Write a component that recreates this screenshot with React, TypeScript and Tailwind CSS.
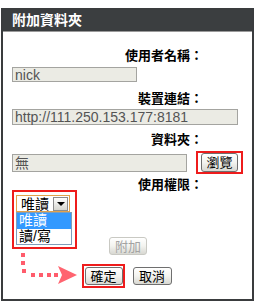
import * as React from 'react';

const CJK = { fontFamily: '"Liberation Sans", "Noto Sans CJK TC", sans-serif' };

function XpButton({ children, disabled, className }: { children: React.ReactNode; disabled?: boolean; className?: string }) {
  return (
    <button
      type="button"
      disabled={disabled}
      className={
        'flex items-center justify-center rounded-[3px] border text-[13px] leading-none bg-gradient-to-b from-white via-[#f3f3ef] to-[#d8d8d2] ' +
        (disabled ? 'border-[#c9c9c3] text-[#a3a3a3] ' : 'border-[#6f6f6f] text-black ') +
        (className ?? '')
      }
    >
      {children}
    </button>
  );
}

function Highlight({ className }: { className: string }) {
  return <span className={'pointer-events-none absolute border-2 border-[#ee1c1c] ' + className} />;
}

// drawn in page coordinates, shifted by the box's top-left padding edge (3, 10)
function PinkArrow() {
  const dots = [
    [21, 253],
    [21, 261],
    [22, 269],
    [31, 273],
    [39, 273],
    [47, 273],
    [54, 273],
  ];
  return (
    <svg className="pointer-events-none absolute left-0 top-0" width="250" height="291" viewBox="3 10 250 291">
      {dots.map(([x, y]) => (
        <rect key={`${x}-${y}`} x={x} y={y} width="4" height="4" fill="#ff5c6c" />
      ))}
      <polygon points="58,266 77,275 58,284 62,275" fill="#ff6470" />
    </svg>
  );
}

export default function App() {
  return (
    <div className="h-[305px] w-[256px] bg-white pl-px pt-2" style={CJK}>
      <div className="relative h-[293px] w-[253px] border-2 border-[#3a3c3e]">
        <div className="flex h-[22px] items-center border-b border-[#9a9a9a] bg-[#3b3e40] pl-[9px] text-[14px] font-bold text-white">
          附加資料夾
        </div>

        <div className="pl-[9px]">
          <div className="mt-[17px] pr-[49px] text-right text-[13px] font-bold leading-[14px] text-black">使用者名稱：</div>
          <div className="mt-1 flex h-[15px] w-[125px] items-center border border-[#a4a4a0] bg-[#ebebe4] pl-0.5 text-[14px] leading-none text-[#545454]">
            nick
          </div>

          <div className="mt-[10px] pr-[49px] text-right text-[13px] font-bold leading-[14px] text-black">裝置連結：</div>
          <div className="mt-[3px] flex h-[16px] w-[226px] items-center border border-[#a4a4a0] bg-[#ebebe4] pl-0.5 text-[14px] leading-none text-[#545454]">
            http://111.250.153.177:8181
          </div>

          <div className="mt-2 pr-[49px] text-right text-[13px] font-bold leading-[14px] text-black">資料夾：</div>
          <div className="mt-1 flex h-[23px] items-center">
            <div className="flex h-[18px] w-[175px] items-center border border-[#a4a4a0] bg-[#ebebe4] pl-0.5 text-[14px] leading-none text-[#545454]">
              無
            </div>
            <div className="relative ml-[14px]">
              <XpButton className="h-[19px] w-[37px]">瀏覽</XpButton>
              <Highlight className="-bottom-0.5 -left-[5px] -right-[5px] -top-0.5" />
            </div>
          </div>

          <div className="mt-1 pr-[49px] text-right text-[13px] font-bold leading-[14px] text-black">使用權限：</div>
          <div className="relative ml-1 mt-[3px] w-[54px]">
            <div className="flex h-[17px] w-[54px] items-center justify-between border border-[#e2a24c] bg-white pl-1 text-[14px] leading-none text-black">
              唯讀
              <span className="mr-px flex h-[14px] w-[15px] items-center justify-center border border-[#8d8d8d] bg-gradient-to-b from-white to-[#d6d6d0]">
                <span className="h-0 w-0 border-x-[4px] border-t-[4px] border-x-transparent border-t-black" />
              </span>
            </div>
            <div className="absolute left-0 top-[17px] z-10 w-[56px] border border-[#7f9db9] bg-white text-[14px] leading-[15px]">
              <div className="h-[16px] bg-[#3399ff] pl-0.5 text-white">唯讀</div>
              <div className="h-[15px] pl-0.5 text-black">讀/寫</div>
            </div>
            <Highlight className="-bottom-[37px] -left-1 -right-[7px] -top-[5px]" />
          </div>
        </div>

        <div className="mt-[25px] flex justify-center">
          <XpButton disabled className="ml-px h-[18px] w-[38px]">附加</XpButton>
        </div>

        <div className="mt-[12px] flex justify-center gap-[10px] pl-px">
          <div className="relative">
            <XpButton className="h-[18px] w-[38px]">確定</XpButton>
            <Highlight className="-bottom-[3px] -left-[3px] -right-[2px] -top-[3px]" />
          </div>
          <XpButton className="h-[18px] w-[39px]">取消</XpButton>
        </div>

        <PinkArrow />
      </div>
    </div>
  );
}
